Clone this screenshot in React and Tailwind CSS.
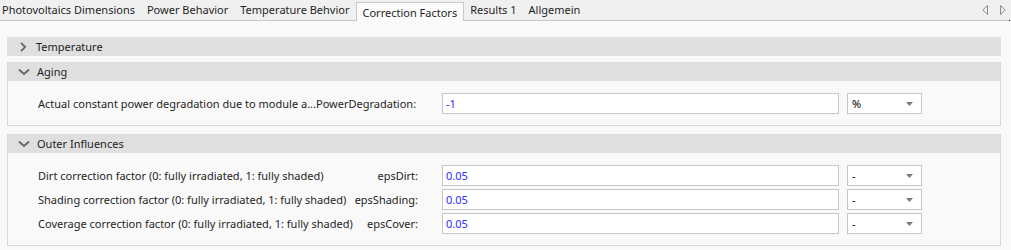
import React from "react";

const font = { fontFamily: '"Segoe UI", "Noto Sans", "Open Sans", sans-serif' };

function ChevronRight() {
  return (
    <svg width="10" height="12" viewBox="0 0 10 12" className="shrink-0">
      <path d="M3 1.8 L7.2 6 L3 10.2" fill="none" stroke="#666666" strokeWidth="1.8" />
    </svg>
  );
}
function ChevronDown() {
  return (
    <svg width="12" height="10" viewBox="0 0 12 10" className="shrink-0">
      <path d="M1 2.5 L6 7 L11 2.5" fill="none" stroke="#666666" strokeWidth="1.8" />
    </svg>
  );
}

function Header({ title, open }) {
  return (
    <div className="h-[19px] bg-[#dfdfdf] flex items-center">
      <div className="w-[29px] flex justify-center pl-[2px]">
        {open ? <ChevronDown /> : <ChevronRight />}
      </div>
      <span className="text-[#1e1e1e]">{title}</span>
    </div>
  );
}

function Select({ value }) {
  return (
    <div className="ml-[8px] w-[75px] h-[21px] bg-white border border-[#c6c6c6] flex items-center justify-between pl-[4px] pr-[8px]">
      <span className="text-black">{value}</span>
      <svg width="7" height="4" viewBox="0 0 7 4">
        <path d="M0 0 H7 L3.5 4 Z" fill="#7a7a7a" />
      </svg>
    </div>
  );
}

function Row({ desc, name, value, unit }) {
  return (
    <div className="flex items-center h-[21px]">
      <div className="w-[380px] flex justify-between items-center text-[#1e1e1e]">
        <span className="whitespace-nowrap">{desc}</span>
        <span className="whitespace-nowrap">{name}</span>
      </div>
      <div className="ml-[24px] w-[397px] h-[21px] bg-white border border-[#c6c6c6] flex items-center pl-[3px] text-[#2b2bff]">
        {value}
      </div>
      <Select value={unit} />
    </div>
  );
}

export default function App() {
  const tabs = [
    "Photovoltaics Dimensions",
    "Power Behavior",
    "Temperature Behvior",
    "Correction Factors",
    "Results 1",
    "Allgemein",
  ];
  return (
    <div className="w-[1011px] h-[250px] bg-[#f9f9f9] text-[11px] leading-[16px] overflow-hidden" style={font}>
      <div className="relative h-[21px] bg-[#f0f0f0] border-b border-[#c8c8c8] flex items-end">
        <div className="flex items-end ml-[-4px]">
          {tabs.map((t) =>
            t === "Correction Factors" ? (
              <div
                key={t}
                className="h-[19px] px-[6px] mb-[-1px] bg-[#fbfbfb] border border-b-0 border-[#c8c8c8] flex items-center pt-[2px] text-[#1e1e1e] whitespace-nowrap"
              >
                {t}
              </div>
            ) : (
              <div key={t} className="h-[20px] px-[6px] flex items-center pb-[1px] text-[#1e1e1e] whitespace-nowrap">
                {t}
              </div>
            )
          )}
        </div>
        <div className="absolute right-[5px] top-[5px] flex gap-[12px]">
          <svg width="6" height="10" viewBox="0 0 6 10">
            <path d="M5.5 0.5 L0.8 5 L5.5 9.5 Z" fill="none" stroke="#8a8a8a" strokeWidth="1" />
          </svg>
          <svg width="6" height="10" viewBox="0 0 6 10">
            <path d="M0.5 0.5 L5.2 5 L0.5 9.5 Z" fill="none" stroke="#8a8a8a" strokeWidth="1" />
          </svg>
        </div>
        <div className="absolute right-[1px] bottom-[-1px] w-[1px] h-[1px] bg-black" />
      </div>

      <div className="pt-[16px] pl-[7px] pr-[10px]">
        <Header title="Temperature" open={false} />

        <div className="mt-[6px] border border-[#d8d8d8] border-t-0">
          <Header title="Aging" open />
          <div className="pt-[12px] pb-[11px] pl-[30px]">
            <Row
              desc="Actual constant power degradation due to module a...PowerDegradation:"
              name=""
              value="-1"
              unit="%"
            />
          </div>
        </div>

        <div className="mt-[8px] border border-[#d8d8d8] border-t-0">
          <Header title="Outer Influences" open />
          <div className="pt-[12px] pb-[11px] pl-[30px] flex flex-col gap-[3px]">
            <Row
              desc="Dirt correction factor (0: fully irradiated, 1: fully shaded)"
              name="epsDirt:"
              value="0.05"
              unit="-"
            />
            <Row
              desc="Shading correction factor (0: fully irradiated, 1: fully shaded)"
              name="epsShading:"
              value="0.05"
              unit="-"
            />
            <Row
              desc="Coverage correction factor (0: fully irradiated, 1: fully shaded)"
              name="epsCover:"
              value="0.05"
              unit="-"
            />
          </div>
        </div>
      </div>
    </div>
  );
}
